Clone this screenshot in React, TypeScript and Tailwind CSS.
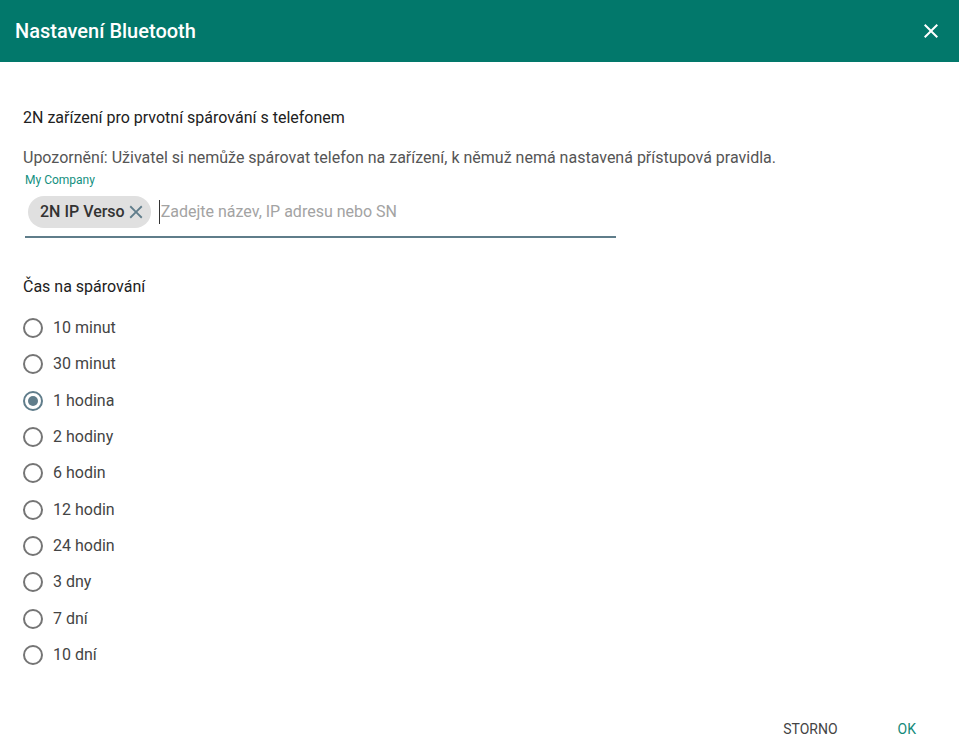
import React from 'react';

const TIMES = ['10 minut', '30 minut', '1 hodina', '2 hodiny', '6 hodin', '12 hodin', '24 hodin', '3 dny', '7 dní', '10 dní'];

// --- RADIO ---
const Radio: React.FC<{ label: string; checked: boolean; onSelect: () => void }> = ({ label, checked, onSelect }) => (
  <label className="flex items-center h-[36.3px] cursor-pointer" onClick={onSelect}>
    <span
      className={`w-5 h-5 rounded-full border-2 flex items-center justify-center ${checked ? 'border-[#607d8b]' : 'border-[#757575]'}`}
    >
      {checked && <span className="w-[10px] h-[10px] rounded-full bg-[#607d8b]" />}
    </span>
    <span className="ml-[10px] text-[16px] text-[#444]">{label}</span>
  </label>
);

const CloseIcon: React.FC<{ className?: string }> = ({ className }) => (
  <svg viewBox="0 0 24 24" className={className} fill="currentColor">
    <path d="M19 6.41 17.59 5 12 10.59 6.41 5 5 6.41 10.59 12 5 17.59 6.41 19 12 13.41 17.59 19 19 17.59 13.41 12z" />
  </svg>
);

export default function App() {
  const [time, setTime] = React.useState('1 hodina');

  return (
    <div className="h-[754px] w-[959px] flex flex-col bg-white font-['Roboto',sans-serif]">
      <div className="h-[62px] shrink-0 bg-[#02786b] flex items-center justify-between pl-[15px] pr-4">
        <h2 className="text-[20px] font-medium text-white">Nastavení Bluetooth</h2>
        <button className="text-white">
          <CloseIcon className="w-6 h-6" />
        </button>
      </div>

      <div className="px-[23px] pt-[46px]">
        <div className="text-[16px] leading-5 text-[#212121]">2N zařízení pro prvotní spárování s telefonem</div>
        <div className="mt-5 text-[16px] leading-5 text-[#555]">
          Upozornění: Uživatel si nemůže spárovat telefon na zařízení, k němuž nemá nastavená přístupová pravidla.
        </div>

        <div className="w-[591px] ml-[2px]">
          <div className="mt-[5px] text-[12px] leading-[14px] text-[#13907f]">My Company</div>
          <div className="mt-[9px] pb-2 border-b-2 border-[#5f7d8a] flex items-center">
            <span className="ml-[3px] h-8 pl-3 pr-1 rounded-full bg-[#e0e0e0] flex items-center">
              <span className="text-[16px] font-medium text-[#333]">2N IP Verso</span>
              <CloseIcon className="w-[22px] h-[22px] text-[#607d8b]" />
            </span>
            <input
              className="ml-[8px] flex-1 outline-none text-[16px] text-[#333] placeholder:text-[#a3a3a3] border-l border-[#333] pl-px"
              placeholder="Zadejte název, IP adresu nebo SN"
            />
          </div>
        </div>

        <div className="mt-[39px] text-[16px] leading-5 text-[#212121]">Čas na spárování</div>
        <div className="mt-[13px] flex flex-col">
          {TIMES.map(t => (
            <Radio key={t} label={t} checked={t === time} onSelect={() => setTime(t)} />
          ))}
        </div>
      </div>

      <div className="mt-auto flex justify-end gap-[28px] pr-[27px] pb-[7px]">
        <button className="h-9 px-4 text-[14px] uppercase text-[#444]">Storno</button>
        <button className="h-9 px-4 text-[14px] uppercase text-[#148a7a]">OK</button>
      </div>
    </div>
  );
}
